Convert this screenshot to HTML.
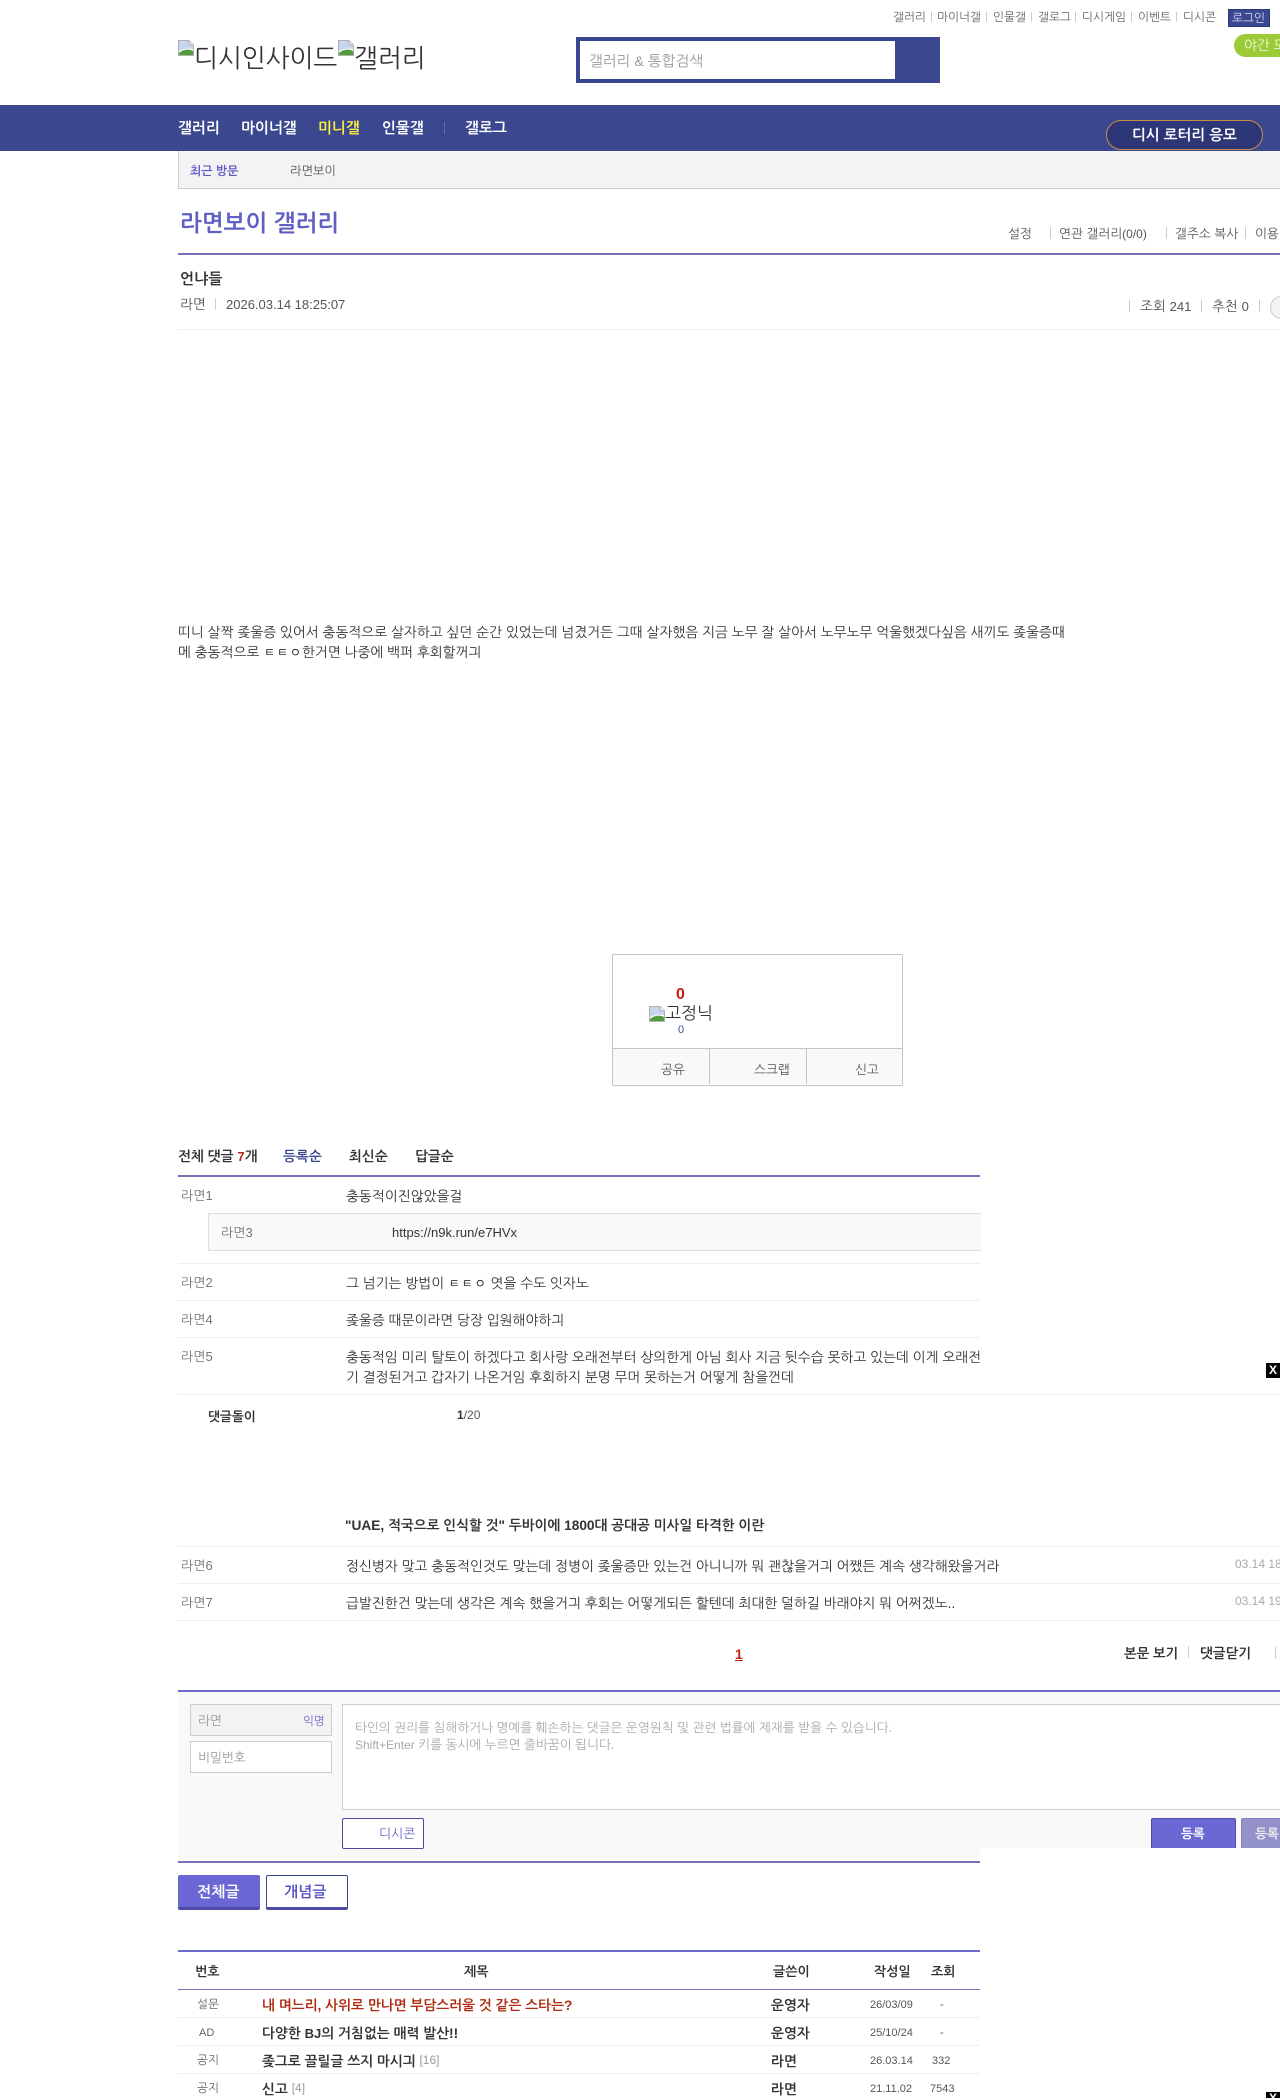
<!DOCTYPE html>
<html lang="ko"><head><meta charset="utf-8"><title>라면보이 갤러리</title>
<style>
html,body{margin:0;padding:0;background:#fff}
body{position:relative;width:1280px;height:2098px;overflow:hidden;font-family:"Liberation Sans","NanumGothic",sans-serif;color:#333;font-size:13.75px}
.t{position:absolute;white-space:nowrap;line-height:20px;height:20px;transform:translateY(1px)}
.b{position:absolute}
.s{position:absolute;width:1px;background:#ccc}
.h{position:absolute;height:1px;background:#eee}
.n{font-size:13px;color:#777}
.c{font-size:13.75px;color:#333}
.top{font-size:11.7px;color:#666}
.g{font-size:12.7px;color:#555}
.bd{font-weight:bold}
.l{font-size:13px}
svg{position:absolute}
.x{position:absolute;left:1266px;width:14px;height:15px;background:#000;color:#fff;font:bold 12px/15px "Liberation Sans",sans-serif;text-align:center}
</style></head><body>

<!-- top links -->
<div class="t top" style="left:893px;top:7px">갤러리</div><div class="s" style="left:931px;top:12px;height:10px"></div>
<div class="t top" style="left:937px;top:7px">마이너갤</div><div class="s" style="left:986px;top:12px;height:10px"></div>
<div class="t top" style="left:993px;top:7px">인물갤</div><div class="s" style="left:1031px;top:12px;height:10px"></div>
<div class="t top" style="left:1038px;top:7px">갤로그</div><div class="s" style="left:1075px;top:12px;height:10px"></div>
<div class="t top" style="left:1082px;top:7px">디시게임</div><div class="s" style="left:1131px;top:12px;height:10px"></div>
<div class="t top" style="left:1138px;top:7px">이벤트</div><div class="s" style="left:1176px;top:12px;height:10px"></div>
<div class="t top" style="left:1183px;top:7px">디시콘</div>
<div class="b" style="left:1228px;top:9px;width:40px;height:16px;background:#3b4890;border:1px solid #29367c"></div>
<div class="t top" style="left:1232px;top:8px;color:#d8def5">로그인</div>
<div class="b" style="left:1234px;top:34px;width:60px;height:23px;background:#9ccb38;border-radius:12px 0 0 12px"></div>
<div class="t" style="left:1244px;top:35px;font-size:13.7px;color:#f4f9e2">야간 모드</div>

<!-- logo -->
<svg style="left:178px;top:40px" width="16" height="16" viewBox="0 0 16 16"><path d="M.5.5H11L15.5 5V15.5H.5Z" fill="#fff" stroke="#b0b0b0"/><path d="M1 1H10.5V5.5H15V9C10 8 5 9 1 11Z" fill="#c6d6ee"/><path d="M1 15V13C6 9 11 9 15 11V15Z" fill="#4f9d3c"/><path d="M11 .5V5H15.5" fill="#eee" stroke="#b0b0b0"/></svg>
<div class="t" style="left:194px;top:42px;height:32px;line-height:32px;font-size:25.4px;color:#333">디시인사이드</div>
<svg style="left:338px;top:40px" width="16" height="16" viewBox="0 0 16 16"><path d="M.5.5H11L15.5 5V15.5H.5Z" fill="#fff" stroke="#b0b0b0"/><path d="M1 1H10.5V5.5H15V9C10 8 5 9 1 11Z" fill="#c6d6ee"/><path d="M1 15V13C6 9 11 9 15 11V15Z" fill="#4f9d3c"/><path d="M11 .5V5H15.5" fill="#eee" stroke="#b0b0b0"/></svg>
<div class="t" style="left:354px;top:42px;height:32px;line-height:32px;font-size:25.4px;color:#333">갤러리</div>

<!-- search -->
<div class="b" style="left:576px;top:37px;width:364px;height:46px;background:#3b4890"></div>
<div class="b" style="left:580px;top:41px;width:315px;height:38px;background:#fff"></div>
<div class="t" style="left:589px;top:50px;font-size:14.7px;color:#999">갤러리 <span style="font-size:14px">&amp;</span> 통합검색</div>

<!-- nav -->
<div class="b" style="left:0;top:105px;width:1280px;height:46px;background:#3b4890"></div>
<div class="t bd" style="left:178px;top:118px;font-size:14.8px;color:#fff">갤러리</div>
<div class="t bd" style="left:241px;top:118px;font-size:14.8px;color:#fff">마이너갤</div>
<div class="t bd" style="left:318px;top:118px;font-size:14.8px;color:#ffed44">미니갤</div>
<div class="t bd" style="left:382px;top:118px;font-size:14.8px;color:#fff">인물갤</div>
<div class="s" style="left:444px;top:122px;height:12px;background:#5f6bb0"></div>
<div class="t bd" style="left:465px;top:118px;font-size:14.8px;color:#fff">갤로그</div>
<div class="b" style="left:1106px;top:120px;width:155px;height:28px;background:#2d3677;border:1px solid #c88d44;border-radius:15px"></div>
<div class="t bd" style="left:1132px;top:125px;font-size:14.7px;color:#fff">디시 로터리 응모</div>

<!-- recent -->
<div class="b" style="left:178px;top:151px;width:1102px;height:37px;background:#f3f3f3;border-left:1px solid #ccc;border-bottom:1px solid #ccc"></div>
<div class="t bd" style="left:190px;top:160px;font-size:12px;color:#5c5cc4">최근 방문</div>
<div class="t" style="left:290px;top:160px;font-size:12.2px;color:#555">라면보이</div>

<!-- title -->
<div class="t" style="left:180px;top:207px;height:30px;line-height:30px;font-size:23.2px;font-weight:bold;color:#5f5fc4">라면보이 갤러리</div>
<div class="t g" style="left:1008px;top:223px">설정</div><div class="s" style="left:1050px;top:227px;height:12px"></div>
<div class="t g" style="left:1059px;top:223px">연관 갤러리<span style="font-size:12px">(0/0)</span></div><div class="s" style="left:1166px;top:227px;height:12px"></div>
<div class="t g" style="left:1175px;top:223px">갤주소 복사</div><div class="s" style="left:1245px;top:227px;height:12px"></div>
<div class="t g" style="left:1255px;top:223px">이용</div>
<div class="b" style="left:178px;top:253px;width:1102px;height:2px;background:#7672b8"></div>

<!-- post head -->
<div class="t bd" style="left:180px;top:269px;font-size:15px;color:#333">언냐들</div>
<div class="t" style="left:180px;top:294px;font-size:13.7px;color:#555">라면</div>
<div class="s" style="left:215px;top:298px;height:12px"></div>
<div class="t" style="left:226px;top:294px;font-size:13px;color:#555">2026.03.14 18:25:07</div>
<div class="s" style="left:1129px;top:300px;height:12px"></div>
<div class="t" style="left:1140px;top:296px;color:#555">조회 <span class="l">241</span></div>
<div class="s" style="left:1201px;top:300px;height:12px"></div>
<div class="t" style="left:1212px;top:296px;color:#555">추천 <span class="l">0</span></div>
<div class="s" style="left:1259px;top:300px;height:12px"></div>
<div class="b" style="left:1270px;top:296px;width:22px;height:21px;border:1px solid #ccc;border-radius:12px;background:#f3f3f3"></div>
<div class="h" style="left:178px;top:329px;width:1102px"></div>

<!-- body -->
<div class="t c" style="left:178px;top:622px">띠니 살짝 좆울증 있어서 충동적으로 살자하고 싶던 순간 있었는데 넘겼거든 그때 살자했음 지금 노무 잘 살아서 노무노무 억울했겠다싶음 새끼도 좆울증때</div>
<div class="t c" style="left:178px;top:642px">메 충동적으로 ㅌㅌㅇ한거면 나중에 백퍼 후회할꺼긔</div>

<!-- recommend -->
<div class="b" style="left:612px;top:954px;width:289px;height:130px;border:1px solid #c4c4c4;border-radius:2px"></div>
<div class="b" style="left:613px;top:1049px;width:289px;height:35px;background:#f9f9f9"></div>
<div class="h" style="left:613px;top:1048px;width:289px;background:#c4c4c4"></div>
<div class="s" style="left:709px;top:1048px;height:36px;background:#c4c4c4"></div>
<div class="s" style="left:806px;top:1048px;height:36px;background:#c4c4c4"></div>
<div class="t bd" style="left:676px;top:984px;font-size:16px;color:#c8200f">0</div>
<svg style="left:649px;top:1006px" width="16" height="16" viewBox="0 0 16 16"><path d="M.5.5H11L15.5 5V15.5H.5Z" fill="#fff" stroke="#b0b0b0"/><path d="M1 1H10.5V5.5H15V9C10 8 5 9 1 11Z" fill="#c6d6ee"/><path d="M1 15V13C6 9 11 9 15 11V15Z" fill="#4f9d3c"/><path d="M11 .5V5H15.5" fill="#eee" stroke="#b0b0b0"/></svg>
<div class="t" style="left:665px;top:1003px;font-size:17px;color:#333">고정닉</div>
<div class="t" style="left:678px;top:1019px;font-size:11px;color:#3b4890">0</div>
<div class="t" style="left:661px;top:1059px;font-size:12.7px;color:#555">공유</div>
<div class="t" style="left:754px;top:1059px;font-size:12.7px;color:#555">스크랩</div>
<div class="t" style="left:855px;top:1059px;font-size:12.7px;color:#555">신고</div>

<!-- comments head -->
<div class="t bd" style="left:178px;top:1146px;font-size:13.75px">전체 댓글 <span class="l" style="color:#c8200f">7</span>개</div>
<div class="t bd" style="left:283px;top:1146px;font-size:13.75px;color:#3b4890">등록순</div>
<div class="t bd" style="left:349px;top:1146px;font-size:13.75px">최신순</div>
<div class="t bd" style="left:415px;top:1146px;font-size:13.75px">답글순</div>
<div class="b" style="left:178px;top:1175px;width:802px;height:2px;background:#7672b8"></div>

<div class="t n" style="left:181px;top:1185px">라면1</div>
<div class="t c" style="left:346px;top:1186px">충동적이진않았을걸</div>
<div class="b" style="left:208px;top:1213px;width:772px;height:36px;background:#f9f9f9;border:1px solid #ddd;border-right:0"></div>
<div class="t n" style="left:221px;top:1222px">라면3</div>
<div class="t" style="left:392px;top:1222px;font-size:13px;color:#333">https://n9k.run/e7HVx</div>
<div class="h" style="left:178px;top:1263px;width:802px"></div>

<div class="t n" style="left:181px;top:1272px">라면2</div>
<div class="t c" style="left:346px;top:1273px">그 넘기는 방법이 ㅌㅌㅇ 엿을 수도 잇자노</div>
<div class="h" style="left:178px;top:1300px;width:802px"></div>

<div class="t n" style="left:181px;top:1309px">라면4</div>
<div class="t c" style="left:346px;top:1310px">좆울증 때문이라면 당장 입원해야하긔</div>
<div class="h" style="left:178px;top:1337px;width:802px"></div>

<div class="t n" style="left:181px;top:1346px">라면5</div>
<div class="t c" style="left:346px;top:1347px">충동적임 미리 탈토이 하겠다고 회사랑 오래전부터 상의한게 아님 회사 지금 뒷수습 못하고 있는데 이게 오래전</div>
<div class="t c" style="left:346px;top:1367px">기 결정된거고 갑자기 나온거임 후회하지 분명 무머 못하는거 어떻게 참을껀데</div>
<div class="x" style="top:1363px">X</div>
<div class="h" style="left:178px;top:1394px;width:1102px"></div>

<div class="t bd" style="left:208px;top:1406px;font-size:12.7px;color:#333">댓글돌이</div>
<div class="t" style="left:457px;top:1404px;font-size:12px;color:#555"><b style="color:#333">1</b>/20</div>
<div class="t bd" style="left:345px;top:1515px;font-size:13.7px;color:#333">"UAE, 적국으로 인식할 것" 두바이에 1800대 공대공 미사일 타격한 이란</div>
<div class="h" style="left:178px;top:1546px;width:1102px"></div>

<div class="t n" style="left:181px;top:1555px">라면6</div>
<div class="t c" style="left:346px;top:1556px">정신병자 맞고 충동적인것도 맞는데 정병이 좆울증만 있는건 아니니까 뭐 괜찮을거긔 어쨌든 계속 생각해왔을거라</div>
<div class="t" style="left:1235px;top:1553px;font-size:12px;color:#aaa">03.14 18:</div>
<div class="h" style="left:178px;top:1583px;width:1102px"></div>
<div class="t n" style="left:181px;top:1592px">라면7</div>
<div class="t c" style="left:346px;top:1593px">급발진한건 맞는데 생각은 계속 했을거긔 후회는 어떻게되든 할텐데 최대한 덜하길 바래야지 뭐 어쩌겠노..</div>
<div class="t" style="left:1235px;top:1590px;font-size:12px;color:#aaa">03.14 19:</div>
<div class="h" style="left:178px;top:1620px;width:1102px"></div>

<div class="t bd" style="left:735px;top:1643px;font-size:14px;color:#c8200f;text-decoration:underline">1</div>
<div class="t bd" style="left:1124px;top:1643px;font-size:13.4px;color:#333">본문 보기</div>
<div class="s" style="left:1188px;top:1646px;height:12px"></div>
<div class="t bd" style="left:1200px;top:1643px;font-size:13.6px;color:#333">댓글닫기</div>
<div class="s" style="left:1275px;top:1647px;height:12px"></div>

<!-- form -->
<div class="b" style="left:178px;top:1692px;width:1102px;height:156px;background:#f9f9f9"></div>
<div class="b" style="left:178px;top:1848px;width:802px;height:13px;background:#f9f9f9"></div>
<div class="b" style="left:178px;top:1690px;width:1102px;height:2px;background:#6f6bc8"></div>
<div class="b" style="left:178px;top:1861px;width:802px;height:2px;background:#7672b8"></div>
<div class="b" style="left:190px;top:1704px;width:140px;height:30px;background:#f3f3f3;border:1px solid #ccc"></div>
<div class="t" style="left:198px;top:1710px;font-size:12.7px;color:#999">라면</div>
<div class="t" style="left:303px;top:1711px;font-size:11.6px;color:#6f6bc8">익명</div>
<div class="b" style="left:190px;top:1741px;width:140px;height:30px;background:#fff;border:1px solid #ccc"></div>
<div class="t" style="left:198px;top:1747px;font-size:12.7px;color:#999">비밀번호</div>
<div class="b" style="left:342px;top:1704px;width:940px;height:104px;background:#fff;border:1px solid #ccc"></div>
<div class="t" style="left:355px;top:1717px;font-size:12.66px;color:#aaa">타인의 권리를 침해하거나 명예를 훼손하는 댓글은 운영원칙 및 관련 법률에 제재를 받을 수 있습니다.</div>
<div class="t" style="left:355px;top:1734px;font-size:12.66px;color:#aaa"><span style="font-size:12px">Shift+Enter</span> 키를 동시에 누르면 줄바꿈이 됩니다.</div>
<div class="b" style="left:342px;top:1818px;width:80px;height:29px;background:#fff;border:1px solid #4a4a9e;border-radius:2px"></div>
<div class="t" style="left:379px;top:1823px;font-size:12.9px;color:#6a66c8">디시콘</div>
<div class="b" style="left:1151px;top:1818px;width:83px;height:40px;background:#6a69d4;border:1px solid #4c4ca8;border-radius:2px"></div>
<div class="t bd" style="left:1181px;top:1823px;font-size:12.7px;color:#fff">등록</div>
<div class="b" style="left:1241px;top:1818px;width:60px;height:40px;background:#9291c9;border:1px solid #8584c0;border-radius:2px"></div>
<div class="t bd" style="left:1255px;top:1823px;font-size:12.7px;color:#eee">등록</div>
<div class="b" style="left:980px;top:1848px;width:300px;height:20px;background:#fff"></div>

<!-- tabs -->
<div class="b" style="left:178px;top:1875px;width:82px;height:32px;background:#6a66d4;border-bottom:3px solid #4f4aa8;border-radius:2px"></div>
<div class="t bd" style="left:197px;top:1882px;font-size:15px;color:#fff">전체글</div>
<div class="b" style="left:266px;top:1875px;width:80px;height:31px;background:#fff;border:1px solid #3b4890;border-bottom:3px solid #4f4aa8;border-radius:2px"></div>
<div class="t bd" style="left:284px;top:1882px;font-size:15px;color:#5a58c0">개념글</div>

<!-- table -->
<div class="b" style="left:178px;top:1950px;width:802px;height:2px;background:#6f6bc8"></div>
<div class="t bd" style="left:195px;top:1961px;font-size:13px">번호</div>
<div class="t bd" style="left:464px;top:1961px;font-size:13px">제목</div>
<div class="t bd" style="left:773px;top:1961px;font-size:13px">글쓴이</div>
<div class="t bd" style="left:874px;top:1961px;font-size:13px">작성일</div>
<div class="t bd" style="left:931px;top:1961px;font-size:13px">조회</div>
<div class="h" style="left:178px;top:1989px;width:802px;background:#7672b8"></div>

<div class="t" style="left:197px;top:1994px;font-size:11.7px;color:#666">설문</div>
<div class="t bd" style="left:262px;top:1995px;font-size:13.75px;color:#b02a10">내 며느리, 사위로 만나면 부담스러울 것 같은 스타는?</div>
<div class="t bd" style="left:771px;top:1995px;font-size:13.75px">운영자</div>
<div class="t" style="left:870px;top:1994px;font-size:11px;color:#555">26/03/09</div>
<div class="t" style="left:940px;top:1994px;font-size:11px;color:#555">-</div>
<div class="h" style="left:178px;top:2017px;width:802px"></div>

<div class="t" style="left:199px;top:2022px;font-size:11px;color:#666">AD</div>
<div class="t bd" style="left:262px;top:2023px;font-size:13.75px">다양한 <span class="l">BJ</span>의 거침없는 매력 발산!!</div>
<div class="t bd" style="left:771px;top:2023px;font-size:13.75px">운영자</div>
<div class="t" style="left:870px;top:2022px;font-size:11px;color:#555">25/10/24</div>
<div class="t" style="left:940px;top:2022px;font-size:11px;color:#555">-</div>
<div class="h" style="left:178px;top:2045px;width:802px"></div>

<div class="t" style="left:197px;top:2050px;font-size:11.7px;color:#666">공지</div>
<div class="t" style="left:262px;top:2051px;font-size:13.75px"><b>좆그로 끌릴글 쓰지 마시긔</b> <span style="font-size:12px;color:#999;position:relative;top:-2px">[16]</span></div>
<div class="t bd" style="left:771px;top:2051px;font-size:13.75px">라면</div>
<div class="t" style="left:870px;top:2050px;font-size:11px;color:#555">26.03.14</div>
<div class="t" style="left:932px;top:2050px;font-size:11px;color:#555">332</div>
<div class="h" style="left:178px;top:2073px;width:802px"></div>

<div class="t" style="left:197px;top:2078px;font-size:11.7px;color:#666">공지</div>
<div class="t" style="left:262px;top:2079px;font-size:13.75px"><b>신고</b> <span style="font-size:12px;color:#999;position:relative;top:-2px">[4]</span></div>
<div class="t bd" style="left:771px;top:2079px;font-size:13.75px">라면</div>
<div class="t" style="left:870px;top:2078px;font-size:11px;color:#555">21.11.02</div>
<div class="t" style="left:930px;top:2078px;font-size:11px;color:#555">7543</div>
<div class="x" style="top:2092px;height:6px;overflow:hidden;line-height:13px">X</div>
</body></html>
